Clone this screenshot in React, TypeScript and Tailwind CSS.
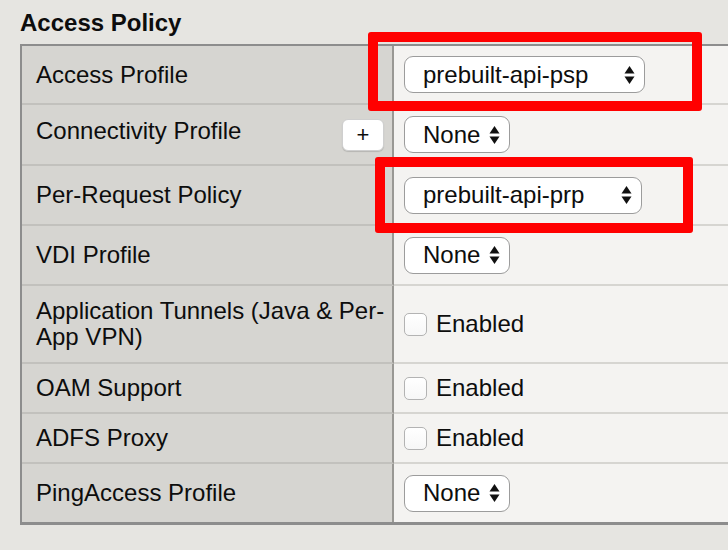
import React from 'react';

type Row = {
  label: string;
  height: string;
  kind: 'select' | 'check';
  value?: string;
  width?: string;
  plus?: boolean;
  labelClass?: string;
};

const rows: Row[] = [
  { label: 'Access Profile', height: 'h-[59px]', kind: 'select', value: 'prebuilt-api-psp', width: 'w-[241px]' },
  { label: 'Connectivity Profile', height: 'h-[61px]', kind: 'select', value: 'None', width: 'w-[106px]', plus: true, labelClass: 'pb-[8px]' },
  { label: 'Per-Request Policy', height: 'h-[60px]', kind: 'select', value: 'prebuilt-api-prp', width: 'w-[238px]' },
  { label: 'VDI Profile', height: 'h-[60px]', kind: 'select', value: 'None', width: 'w-[106px]' },
  { label: 'Application Tunnels (Java & Per-App VPN)', height: 'h-[78px]', kind: 'check' },
  { label: 'OAM Support', height: 'h-[50px]', kind: 'check' },
  { label: 'ADFS Proxy', height: 'h-[50px]', kind: 'check' },
  { label: 'PingAccess Profile', height: 'h-[58px]', kind: 'select', value: 'None', width: 'w-[106px]' },
];

const Arrows = () => (
  <svg width="11" height="20" viewBox="0 0 11 20" className="shrink-0">
    <path d="M5.5 1 L10.5 8.5 L0.5 8.5 Z" fill="#111" />
    <path d="M5.5 19 L10.5 11.5 L0.5 11.5 Z" fill="#111" />
  </svg>
);

const Select = ({ value, width }: { value: string; width: string }) => (
  <div
    className={`${width} h-[37px] flex items-center justify-between pl-[18px] pr-[9px] bg-white border-[1.5px] border-[#9c9c9c] rounded-[9px]`}
  >
    <span>{value}</span>
    <Arrows />
  </div>
);

const Checkbox = () => (
  <div className="flex items-center gap-[9px]">
    <div className="w-[23px] h-[23px] rounded-[5px] border border-[#b3b3b3] bg-gradient-to-b from-white to-[#f7f7f7]" />
    <span>Enabled</span>
  </div>
);

export default function App() {
  return (
    <div
      className="relative w-[728px] h-[550px] overflow-hidden bg-[#e6e5e1] text-[#0d0d0d] text-[24px] leading-[26px]"
      style={{ fontFamily: '"Liberation Sans", Arial, Helvetica, sans-serif' }}
    >
      <h2 className="pl-[20px] pt-[11px] h-[44px] text-[24px] leading-[24px] font-bold">Access Policy</h2>
      <div className="ml-[20px] border-l-2 border-t-2 border-b-[3px] border-[#8d8d8d]">
        {rows.map((row, i) => {
          const last = i === rows.length - 1;
          return (
            <div key={row.label} className={`flex ${row.height}`}>
              <div
                className={`w-[372px] shrink-0 flex items-center justify-between pl-[14px] pr-[4px] bg-[#d6d5d1] border-r-2 border-r-[#999894] ${
                  last ? '' : 'border-b-2 border-b-[#c2c1bd]'
                }`}
              >
                <span className={row.labelClass ?? ''}>{row.label}</span>
                {row.plus && (
                  <div className="w-[42px] h-[32px] mr-[4px] shrink-0 flex items-center justify-center bg-white rounded-[6px] border border-[#cfcfcf] shadow-[0_1px_1px_rgba(0,0,0,0.15)] text-[22px]">
                    +
                  </div>
                )}
              </div>
              <div
                className={`flex-1 flex items-center pl-[10px] bg-[#f4f3f1] ${
                  last ? '' : 'border-b-2 border-b-[#d6d5d1]'
                }`}
              >
                {row.kind === 'select' ? <Select value={row.value!} width={row.width!} /> : <Checkbox />}
              </div>
            </div>
          );
        })}
      </div>

      {/* red annotation boxes */}
      <div className="absolute left-[368px] top-[32px] w-[334px] h-[79px] border-[10px] border-[#ff0000] rounded-[3px]" />
      <div className="absolute left-[375px] top-[157px] w-[318px] h-[76px] border-[10px] border-[#ff0000] rounded-[3px]" />
    </div>
  );
}
